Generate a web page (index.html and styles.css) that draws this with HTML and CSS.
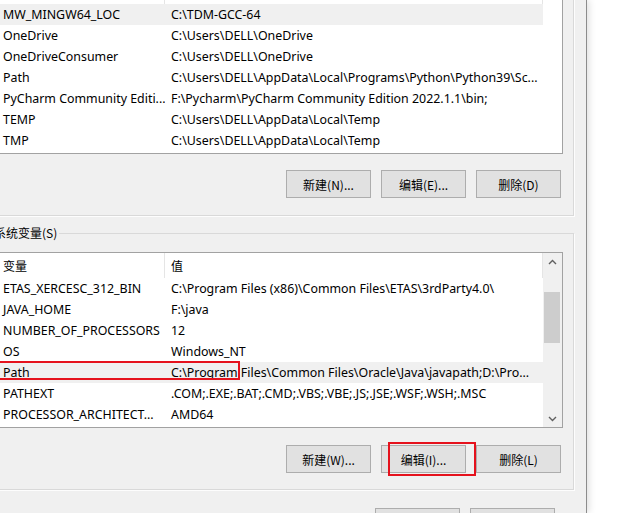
FILE: index.html
```html
<!DOCTYPE html>
<html lang="zh-CN">
<head>
<meta charset="utf-8">
<title>环境变量</title>
<link rel="stylesheet" href="styles.css">
</head>
<body>
<div class="screen">
  <div class="window">
    <div class="group group-user">
      <div class="listview">
        <div class="lv-main">
          <div class="lv-header"><div class="hcell c-name"></div><div class="hcell c-value"></div></div>
          <div class="lv-row is-hot"><span class="cell c-name">MW_MINGW64_LOC</span><span class="cell c-value">C:\TDM-GCC-64</span></div>
          <div class="lv-row"><span class="cell c-name">OneDrive</span><span class="cell c-value">C:\Users\DELL\OneDrive</span></div>
          <div class="lv-row"><span class="cell c-name">OneDriveConsumer</span><span class="cell c-value">C:\Users\DELL\OneDrive</span></div>
          <div class="lv-row"><span class="cell c-name">Path</span><span class="cell c-value">C:\Users\DELL\AppData\Local\Programs\Python\Python39\Sc...</span></div>
          <div class="lv-row"><span class="cell c-name">PyCharm Community Editi...</span><span class="cell c-value">F:\Pycharm\PyCharm Community Edition 2022.1.1\bin;</span></div>
          <div class="lv-row"><span class="cell c-name">TEMP</span><span class="cell c-value">C:\Users\DELL\AppData\Local\Temp</span></div>
          <div class="lv-row"><span class="cell c-name">TMP</span><span class="cell c-value">C:\Users\DELL\AppData\Local\Temp</span></div>
        </div>
      </div>
      <div class="btn-row">
        <button class="btn">新建(N)...</button>
        <button class="btn">编辑(E)...</button>
        <button class="btn">删除(D)</button>
      </div>
    </div>

    <fieldset class="group group-sys">
      <legend class="legend">系统变量(S)</legend>
      <div class="listview">
        <div class="lv-main">
          <div class="lv-header"><div class="hcell c-name">变量</div><div class="hcell c-value">值</div></div>
          <div class="lv-row"><span class="cell c-name">ETAS_XERCESC_312_BIN</span><span class="cell c-value">C:\Program Files (x86)\Common Files\ETAS\3rdParty4.0\</span></div>
          <div class="lv-row"><span class="cell c-name">JAVA_HOME</span><span class="cell c-value">F:\java</span></div>
          <div class="lv-row"><span class="cell c-name">NUMBER_OF_PROCESSORS</span><span class="cell c-value">12</span></div>
          <div class="lv-row"><span class="cell c-name">OS</span><span class="cell c-value">Windows_NT</span></div>
          <div class="lv-row is-hot"><span class="cell c-name">Path</span><span class="cell c-value">C:\Program Files\Common Files\Oracle\Java\javapath;D:\Pro...</span></div>
          <div class="lv-row"><span class="cell c-name">PATHEXT</span><span class="cell c-value">.COM;.EXE;.BAT;.CMD;.VBS;.VBE;.JS;.JSE;.WSF;.WSH;.MSC</span></div>
          <div class="lv-row"><span class="cell c-name">PROCESSOR_ARCHITECT...</span><span class="cell c-value">AMD64</span></div>
        </div>
        <div class="scrollbar">
          <div class="sb-btn"><svg width="9" height="6" viewBox="0 0 9 6"><polyline points="1,5 4.5,1.5 8,5" fill="none" stroke="#606060" stroke-width="1.4"/></svg></div>
          <div class="sb-track"><div class="sb-thumb"></div></div>
          <div class="sb-btn"><svg width="9" height="6" viewBox="0 0 9 6"><polyline points="1,1 4.5,4.5 8,1" fill="none" stroke="#606060" stroke-width="1.4"/></svg></div>
        </div>
      </div>
      <div class="btn-row">
        <button class="btn">新建(W)...</button>
        <button class="btn">编辑(I)...</button>
        <button class="btn">删除(L)</button>
      </div>
    </fieldset>

    <div class="footer">
      <button class="btn" aria-label="确定"></button>
      <button class="btn" aria-label="取消"></button>
    </div>
  </div>

  <div class="annot annot-path"></div>
  <div class="annot annot-edit"></div>
</div>
</body>
</html>
```
FILE: styles.css
```css
* { box-sizing: border-box; }
html, body { margin: 0; padding: 0; background: #fff; }
body {
  font-family: "Noto Sans", "Noto Sans CJK SC", sans-serif;
  font-size: 12px;
  color: #000;
}
.screen {
  position: relative;
  width: 622px;
  height: 513px;
  overflow: hidden;
  display: flex;
  background: #fff;
}
.window {
  width: 603px;
  margin-left: -16px;
  flex-shrink: 0;
  display: flex;
  flex-direction: column;
  background: #f0f0f0;
  border-right: 1px solid #8c8c8c;
  box-shadow: 2px 0 7px rgba(0, 0, 0, 0.13);
}
.group {
  width: 586px;
  margin: 0 0 0 4px;
  border: 1px solid #d9d9d9;
  box-shadow: 1px 1px 0 #fdfdfd;
  padding: 17px 10px 17px 10px;
  flex-shrink: 0;
}
.group-user { margin-top: -40px; }
.group-sys {
  margin-top: 9px;
  padding: 11px 10px 16px 10px;
  min-width: 0;
  min-inline-size: 0;
}
.legend {
  padding: 0 2px;
  margin-left: -7px;
  line-height: 16px;
  font-size: 12px;
  font-family: "Noto Sans CJK SC", "Noto Sans", sans-serif;
}
.listview {
  height: 176px;
  border: 1px solid #a2a2a2;
  background: #fff;
  display: flex;
  overflow: hidden;
}
.lv-main {
  width: 543px;
  flex-shrink: 0;
  display: flex;
  flex-direction: column;
}
.lv-header {
  height: 25px;
  display: grid;
  grid-template-columns: 165px 378px;
  flex-shrink: 0;
}
.hcell {
  border-right: 1px solid #e5e5e5;
  line-height: 25px;
  white-space: nowrap;
  overflow: hidden;
  font-family: "Noto Sans CJK SC", "Noto Sans", sans-serif;
}
.lv-row {
  height: 21px;
  display: grid;
  grid-template-columns: 165px 378px;
  flex-shrink: 0;
}
.lv-row.is-hot { background: #f0f0f0; }
.cell {
  font-size: 12.4px;
  line-height: 21px;
  white-space: nowrap;
  overflow: hidden;
}
.c-name { padding-left: 3px; }
.c-value { padding-left: 6px; }
.scrollbar {
  flex: 1;
  background: #f0f0f0;
  display: flex;
  flex-direction: column;
}
.sb-btn {
  height: 17px;
  display: flex;
  align-items: center;
  justify-content: center;
  flex-shrink: 0;
}
.sb-track {
  flex: 1;
  padding: 0 2px 0 1px;
}
.sb-thumb {
  margin-top: 22px;
  height: 51px;
  background: #cdcdcd;
}
.btn-row {
  display: flex;
  justify-content: flex-end;
  gap: 10px;
  padding-right: 2px;
  margin-top: 16px;
}
.group-sys .btn-row { margin-top: 17px; }
.btn {
  width: 85px;
  height: 28px;
  margin: 0;
  padding: 0;
  background: #e1e1e1;
  border: 1px solid #adadad;
  border-radius: 0;
  font-family: "Noto Sans CJK SC", "Noto Sans", sans-serif;
  font-size: 12px;
  color: #000;
}
.footer {
  display: flex;
  justify-content: flex-end;
  gap: 10px;
  padding-right: 31px;
  margin-top: 18px;
}
.annot {
  position: absolute;
  border: 2px solid #e5121d;
}
.annot-path { left: -5px; top: 361px; width: 245px; height: 19px; }
.annot-edit { left: 388px; top: 442px; width: 88px; height: 34px; }
```
